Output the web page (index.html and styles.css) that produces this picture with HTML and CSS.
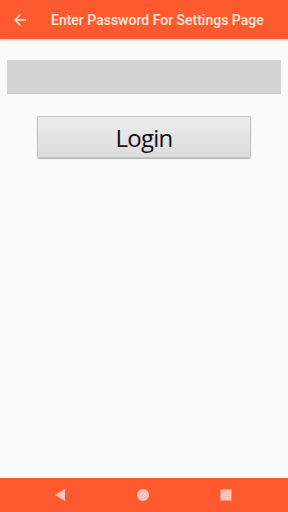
FILE: index.html
```html
<!DOCTYPE html>
<html lang="en">
<head>
    <meta charset="UTF-8">
    <meta name="viewport" content="width=device-width, initial-scale=1.0">
    <title>Settings Password</title>
    <link rel="stylesheet" href="styles.css">
</head>
<body>
    <div class="screen">
        <header class="toolbar">
            <svg class="back" width="18" height="18" viewBox="0 0 24 24">
                <path d="M20 11H7.83l5.59-5.59L12 4l-8 8 8 8 1.41-1.41L7.83 13H20v-2z" fill="#ffe6dc"/>
            </svg>
            <h1 class="title">Enter Password For Settings Page</h1>
        </header>
        <main class="content">
            <input class="password" type="password">
            <button class="login">Login</button>
        </main>
        <nav class="navbar">
            <svg width="14" height="14" viewBox="0 0 14 14"><path d="M12 1v12L2 7z" fill="#fcc4b2"/></svg>
            <svg width="14" height="14" viewBox="0 0 14 14"><circle cx="7" cy="7" r="6" fill="#fcc4b2"/></svg>
            <svg width="14" height="14" viewBox="0 0 14 14"><rect x="1.5" y="1.5" width="11" height="11" fill="#fcc4b2"/></svg>
        </nav>
    </div>
</body>
</html>
```

FILE: styles.css
```css
* {
    margin: 0;
    padding: 0;
    box-sizing: border-box;
}

body {
    font-family: Roboto, "Noto Sans", sans-serif;
    background: #fafafa;
}

.screen {
    width: 288px;
    height: 512px;
    display: flex;
    flex-direction: column;
}

.toolbar {
    height: 39px;
    background: #ff5a2f;
    display: flex;
    align-items: center;
    padding-left: 11px;
    box-shadow: 0 1px 2px rgba(0, 0, 0, 0.15);
}

.back {
    flex-shrink: 0;
}

.title {
    margin-left: 22px;
    font-size: 14px;
    font-weight: 500;
    color: #ffe8de;
    white-space: nowrap;
}

.content {
    flex: 1;
    display: flex;
    flex-direction: column;
    align-items: center;
    padding-top: 21px;
}

.password {
    width: 274px;
    height: 34px;
    border: none;
    border-bottom: 1px solid #c8c8c8;
    background: #d4d4d4;
    outline: none;
}

.login {
    margin-top: 22px;
    width: 214px;
    height: 42px;
    border: 1px solid #c4c4c4;
    border-radius: 2px;
    background: linear-gradient(to bottom, #ededed 0%, #dcdcdc 100%);
    box-shadow: 0 1px 1px rgba(0, 0, 0, 0.3);
    font-family: "Open Sans", "Noto Sans", sans-serif;
    font-size: 24px;
    letter-spacing: -0.8px;
    color: #111;
}

.navbar {
    height: 34px;
    background: #ff5a2f;
    display: flex;
    align-items: center;
    justify-content: space-between;
    padding: 0 55px 0 53px;
}
```
